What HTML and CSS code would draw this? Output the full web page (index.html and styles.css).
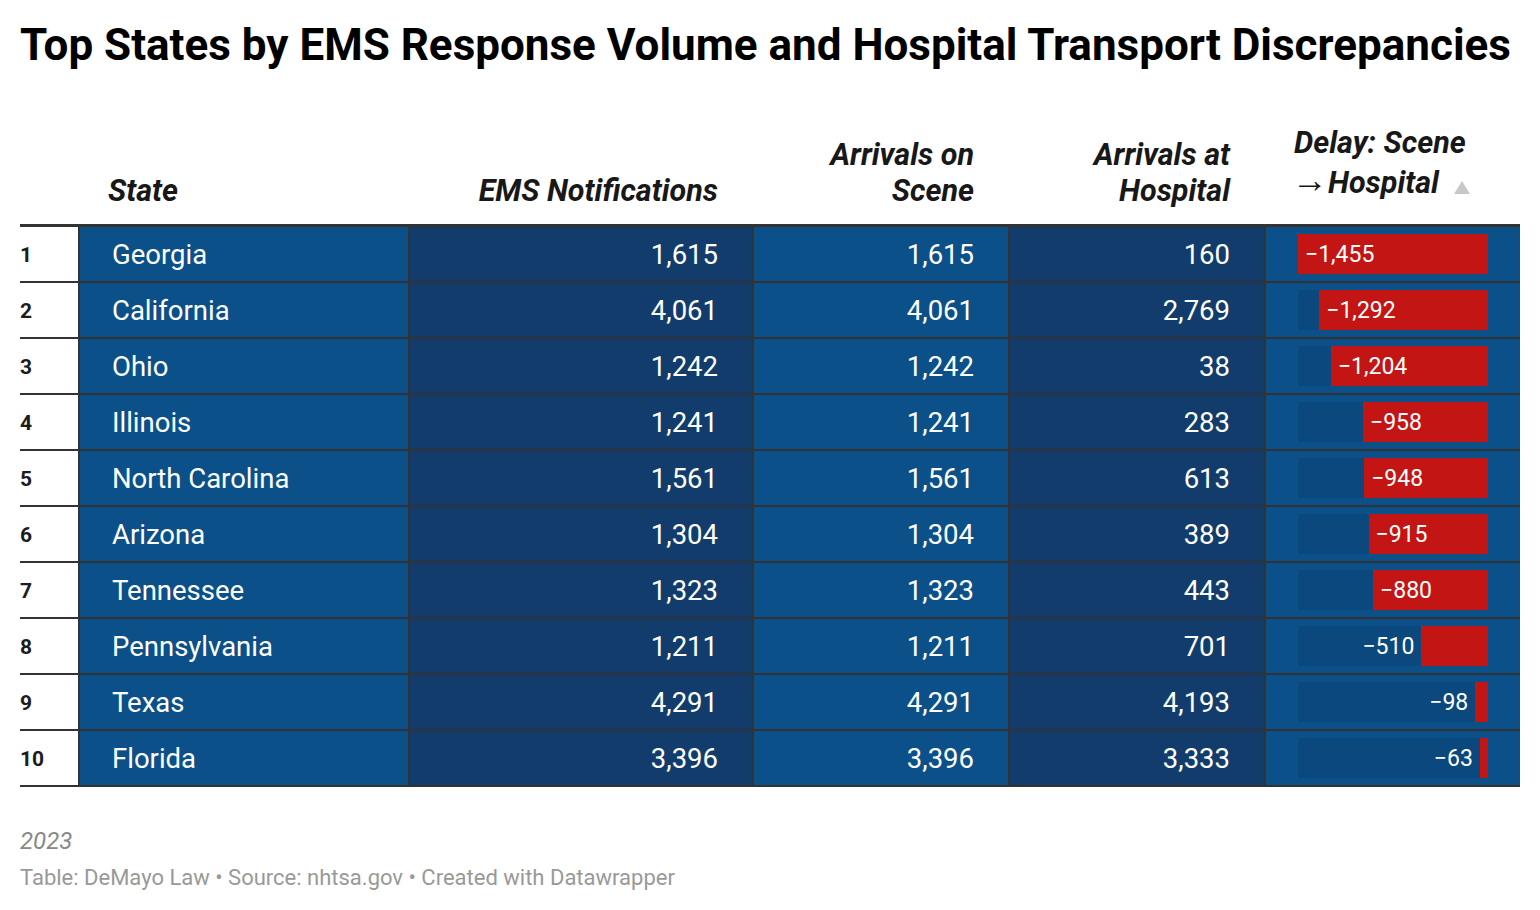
FILE: index.html
```html
<!DOCTYPE html>
<html lang="en">
<head>
<meta charset="utf-8">
<title>Top States by EMS Response Volume</title>
<link rel="stylesheet" href="styles.css">
</head>
<body>
<div class="chart">
  <h1 class="title">Top States by EMS Response Volume and Hospital Transport Discrepancies</h1>
  <table class="tbl">
    <colgroup>
      <col class="c-rank"><col class="c-state"><col class="c-ems"><col class="c-scene"><col class="c-hosp"><col class="c-delay">
    </colgroup>
    <thead>
      <tr>
        <th class="h-rank"></th>
        <th class="h-state">State</th>
        <th class="h-num">EMS Notifications</th>
        <th class="h-num">Arrivals on<br>Scene</th>
        <th class="h-num">Arrivals at<br>Hospital</th>
        <th class="h-delay">Delay: Scene<br><span class="arrow">→</span>Hospital<svg class="sort" width="16" height="13" viewBox="0 0 16 13" aria-hidden="true"><polygon points="8,0 16,13 0,13" fill="#c8c8c8"/></svg></th>
      </tr>
    </thead>
    <tbody>
      <tr><td class="rank">1</td><td class="state">Georgia</td><td class="num dark">1,615</td><td class="num light">1,615</td><td class="num dark">160</td>
        <td class="delay"><div class="track"><div class="bar in" style="width:100%"><span class="lbl">−1,455</span></div></div></td></tr>
      <tr><td class="rank">2</td><td class="state">California</td><td class="num dark">4,061</td><td class="num light">4,061</td><td class="num dark">2,769</td>
        <td class="delay"><div class="track"><div class="bar in" style="width:88.8%"><span class="lbl">−1,292</span></div></div></td></tr>
      <tr><td class="rank">3</td><td class="state">Ohio</td><td class="num dark">1,242</td><td class="num light">1,242</td><td class="num dark">38</td>
        <td class="delay"><div class="track"><div class="bar in" style="width:82.7%"><span class="lbl">−1,204</span></div></div></td></tr>
      <tr><td class="rank">4</td><td class="state">Illinois</td><td class="num dark">1,241</td><td class="num light">1,241</td><td class="num dark">283</td>
        <td class="delay"><div class="track"><div class="bar in" style="width:65.8%"><span class="lbl">−958</span></div></div></td></tr>
      <tr><td class="rank">5</td><td class="state">North Carolina</td><td class="num dark">1,561</td><td class="num light">1,561</td><td class="num dark">613</td>
        <td class="delay"><div class="track"><div class="bar in" style="width:65.2%"><span class="lbl">−948</span></div></div></td></tr>
      <tr><td class="rank">6</td><td class="state">Arizona</td><td class="num dark">1,304</td><td class="num light">1,304</td><td class="num dark">389</td>
        <td class="delay"><div class="track"><div class="bar in" style="width:62.9%"><span class="lbl">−915</span></div></div></td></tr>
      <tr><td class="rank">7</td><td class="state">Tennessee</td><td class="num dark">1,323</td><td class="num light">1,323</td><td class="num dark">443</td>
        <td class="delay"><div class="track"><div class="bar in" style="width:60.5%"><span class="lbl">−880</span></div></div></td></tr>
      <tr><td class="rank">8</td><td class="state">Pennsylvania</td><td class="num dark">1,211</td><td class="num light">1,211</td><td class="num dark">701</td>
        <td class="delay"><div class="track"><span class="lbl out">−510</span><div class="bar" style="width:35.1%"></div></div></td></tr>
      <tr><td class="rank">9</td><td class="state">Texas</td><td class="num dark">4,291</td><td class="num light">4,291</td><td class="num dark">4,193</td>
        <td class="delay"><div class="track"><span class="lbl out">−98</span><div class="bar" style="width:6.7%"></div></div></td></tr>
      <tr><td class="rank">10</td><td class="state">Florida</td><td class="num dark">3,396</td><td class="num light">3,396</td><td class="num dark">3,333</td>
        <td class="delay"><div class="track"><span class="lbl out">−63</span><div class="bar" style="width:4.3%"></div></div></td></tr>
    </tbody>
  </table>
  <div class="notes">2023</div>
  <div class="footer">Table: DeMayo Law • Source: nhtsa.gov • Created with Datawrapper</div>
</div>
</body>
</html>
```
FILE: styles.css
```css
* { box-sizing: border-box; }
html, body { margin: 0; padding: 0; background: #fff; }
body { font-family: Roboto, "Noto Sans", "Liberation Sans", sans-serif; color: #181818; }

.chart { padding: 18px 20px 0 20px; width: 1540px; }

.title {
  margin: 0;
  font-size: 44px;
  font-weight: 700;
  line-height: 54px;
  color: #000;
}

.tbl {
  margin-top: 41px;
  width: 1500px;
  border-collapse: separate;
  border-spacing: 0;
  table-layout: fixed;
}
.c-rank { width: 58px; }
.c-state { width: 330px; }
.c-ems { width: 344px; }
.c-scene { width: 256px; }
.c-hosp { width: 256px; }
.c-delay { width: 256px; }

.tbl th {
  height: 114px;
  vertical-align: bottom;
  font-size: 30.5px;
  font-weight: 700;
  font-style: italic;
  line-height: 36px;
  color: #181818;
  border-bottom: 3px solid #333;
  padding: 0 34px 15px 32px;
}
.tbl th.h-state { text-align: left; padding-left: 30px; }
.tbl th.h-num { text-align: right; }
.tbl th.h-delay { text-align: left; padding-left: 30px; padding-bottom: 21px; line-height: 40px; }
.arrow { display: inline-block; font-style: normal; font-weight: 400; font-size: 36px; line-height: 0; margin-left: -2px; margin-right: 0; vertical-align: 1px; }
.sort { margin-left: 15px; vertical-align: -1px; }

.tbl td {
  height: 56px;
  border-bottom: 2px solid #333;
  font-size: 27.5px;
  color: #fff;
  padding: 0;
  vertical-align: middle;
}
.tbl td + td { border-left: 2px solid #333; }

.rank { background: #fff; color: #1c1c1c !important; font-weight: 700; font-size: 21px !important; padding-top: 2px !important; }
.state { background: #0b5089; padding-left: 32px !important; }
.num { text-align: right; padding-right: 34px !important; }
.dark { background: #123c6b; }
.light { background: #0b5089; }
.delay { background: #0b5089; padding-left: 32px !important; }

.track {
  width: 190px;
  height: 40px;
  background: #0a487d;
  display: flex;
  justify-content: flex-end;
  align-items: center;
}
.bar {
  height: 40px;
  background: #c41515;
  display: flex;
  align-items: center;
}
.lbl { font-size: 23px; color: #fff; white-space: nowrap; }
.bar.in .lbl { padding-left: 7px; }
.lbl.out { margin-right: 7px; }

.notes {
  margin-top: 39px;
  font-size: 24px;
  font-style: italic;
  color: #888;
  line-height: 30px;
}
.footer {
  margin-top: 7px;
  font-size: 22px;
  color: #999;
  line-height: 30px;
}
```
